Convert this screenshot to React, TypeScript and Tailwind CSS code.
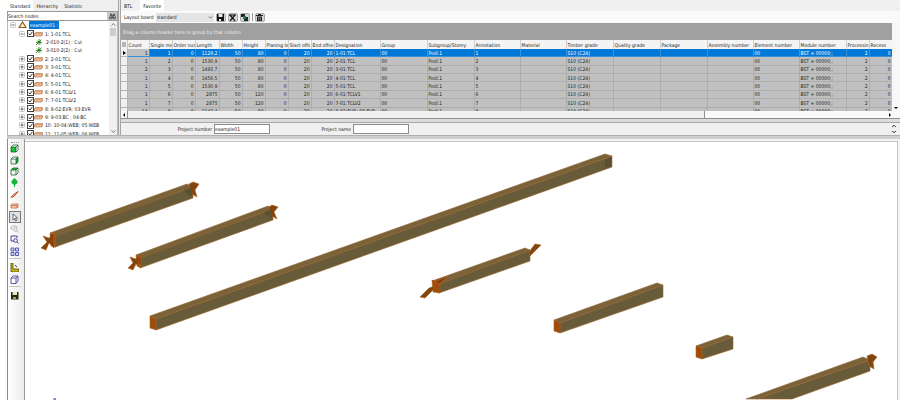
import { useState, type ReactNode } from 'react'
import { Binoculars, ChevronDown, ChevronUp } from 'lucide-react'
import clsx from 'clsx'

const treeItems = [
  { label: '2: 2-01:TCL' },
  { label: '3: 3-01:TCL' },
  { label: '4: 4-01:TCL' },
  { label: '5: 5-01:TCL' },
  { label: '6: 6-01:TCLV1' },
  { label: '7: 7-01:TCLV2' },
  { label: '8: 8-02:EVR; 03:EVR' },
  { label: '9: 9-03:BC ; 04:BC' },
  { label: '10: 10-04:WEB; 05:WEB' },
  { label: '11: 11-05:WEB; 06:WEB' }
]

const columns = [
  { label: 'Count', width: 22, numeric: true },
  { label: 'Single me', width: 23, numeric: true },
  { label: 'Order nur', width: 23, numeric: true },
  { label: 'Length', width: 24, numeric: true },
  { label: 'Width', width: 23, numeric: true },
  { label: 'Height', width: 23, numeric: true },
  { label: 'Planing le', width: 23, numeric: true },
  { label: 'Start offs', width: 23, numeric: true },
  { label: 'End offse', width: 23, numeric: true },
  { label: 'Designation', width: 46 },
  { label: 'Group', width: 47 },
  { label: 'Subgroup/Storey', width: 47 },
  { label: 'Annotation', width: 46 },
  { label: 'Material', width: 46 },
  { label: 'Timber grade', width: 47 },
  { label: 'Quality grade', width: 47 },
  { label: 'Package', width: 47 },
  { label: 'Assembly number', width: 46 },
  { label: 'Element number', width: 46 },
  { label: 'Module number', width: 47 },
  { label: 'Processin', width: 23, numeric: true },
  { label: 'Recess', width: 23, numeric: true }
]

const members = [
  { count: 1, no: 1, length: '1129,2', height: 80, name: '1-01:TCL' },
  { count: 1, no: 2, length: '1530,9', height: 80, name: '2-01:TCL' },
  { count: 2, no: 3, length: '1493,7', height: 80, name: '3-01:TCL' },
  { count: 1, no: 4, length: '1456,5', height: 80, name: '4-01:TCL' },
  { count: 1, no: 5, length: '1530,9', height: 80, name: '5-01:TCL' },
  { count: 1, no: 6, length: '2875', height: 120, name: '6-01:TCLV1' },
  { count: 1, no: 7, length: '2875', height: 120, name: '7-01:TCLV2' },
  { count: 14, no: 8, length: '1142,4', height: 80, name: '8-02:EVR; 03:EVR' }
]

const rows = members.map((m) => [
  m.count, m.no, 0, m.length, 50, m.height, 0, 20, 20, m.name, '00', 'Podl.1', m.no, '',
  'S10 (C24)', '', '', '', '00', 'BST = 00000;;', 2, 0
])

function Expander({ open = false }: { open?: boolean }) {
  return (
    <button aria-label={open ? 'Collapse' : 'Expand'} className="shrink-0">
      <svg viewBox="0 0 6 6" className="size-[6px]">
        <rect x=".5" y=".5" width="5" height="5" rx="1" fill="#fff" stroke="#b5b5b5" strokeWidth=".8" />
        <path d={open ? 'M1.5 3h3' : 'M1.5 3h3M3 1.5v3'} stroke="#444" strokeWidth=".8" />
      </svg>
    </button>
  )
}

function Beam() {
  return (
    <svg viewBox="0 0 9 6" className="h-[6px] w-[9px] shrink-0">
      <path d="M.5 2.5 1.500 1.500h7v2L7.500 5h-7z" fill="#f3cdac" stroke="#b9794c" strokeWidth=".7" />
      <path d="M.5 2.7h7V5M2 4h1M5 4h1" fill="none" stroke="#b9794c" strokeWidth=".6" />
    </svg>
  )
}

function CutIcon() {
  return (
    <svg viewBox="0 0 8 8" className="size-[8px] shrink-0">
      <path d="M1 7 6.5 1.5M2 2.5l4 4M4 1v6M1 4.5h6" stroke="#4c9a3c" strokeWidth="1" />
      <path d="M3 3h2.500v2H3z" fill="#2b7d20" />
    </svg>
  )
}

function TreeRow({ label, open }: { label: string; open?: boolean }) {
  return (
    <li className="flex items-center gap-[2px] pl-[11px]">
      <Expander open={open} />
      <label className="flex items-center whitespace-nowrap">
        <span className="grid place-items-center">
          <input type="checkbox" defaultChecked className="col-start-1 row-start-1 size-[7px] appearance-none border border-[#444] bg-white" />
          <svg viewBox="0 0 7 7" className="pointer-events-none col-start-1 row-start-1 size-[7px]">
            <path d="m1.700 3.500 1.300 1.500 2.400-3.200" fill="none" stroke="#222" strokeWidth=".9" />
          </svg>
        </span>
        <Beam />
        <span className="pl-[2px]">{label}</span>
      </label>
    </li>
  )
}

function TreePanel() {
  const [tab, setTab] = useState('Standard')
  return (
    <aside className="flex w-[112px] shrink-0 flex-col border-r border-[#a5a5a5] bg-[#f0f0f0]">
      <div className="flex h-[11px] shrink-0 items-stretch">
        {['Standard', 'Hierarchy', 'Statistic'].map((t) => (
          <button
            key={t}
            onClick={() => setTab(t)}
            className={clsx('px-[3px]', tab === t && 'bg-white')}
          >
            {t}
          </button>
        ))}
      </div>
      <div className="flex h-[10px] shrink-0 border border-[#9a9a9a] bg-white">
        <input aria-label="Search nodes" placeholder="Search nodes" className="min-w-0 flex-1 outline-none placeholder:text-[#222]" />
        <button aria-label="Search" className="flex w-[10px] items-center justify-center bg-[#c9c9c9]">
          <Binoculars size={7} />
        </button>
      </div>
      <div className="flex min-h-0 flex-1 overflow-hidden border-x border-[#b9b9b9] bg-white">
        <ul className="grid h-[117px] min-w-0 flex-1 auto-rows-fr overflow-hidden">
          <li className="flex items-center gap-[2px] pl-[2px]">
            <Expander open />
            <svg viewBox="0 0 9 8" className="h-[8px] w-[9px]">
              <path d="M4.500 1 8 6.500H1z" fill="#fff3c4" stroke="#8a5a20" strokeWidth="1.200" />
            </svg>
            <span className="bg-[#0078d7] px-px leading-[8px] text-white">example01 :</span>
          </li>
          <TreeRow open label="1: 1-01:TCL" />
          <li className="flex items-center gap-[3px] pl-[27px]"><CutIcon />2-010-2(1) : Cut</li>
          <li className="flex items-center gap-[3px] pl-[27px]"><CutIcon />3-010-2(2) : Cut</li>
          {treeItems.map((item) => <TreeRow key={item.label} label={item.label} />)}
        </ul>
        <div className="flex w-[8px] shrink-0 flex-col items-center bg-[#f0f0f0]">
          <ChevronUp size={7} />
          <div className="h-[8px] w-[6px] bg-[#cdcdcd]" />
          <ChevronDown size={7} className="mt-auto" />
        </div>
      </div>
    </aside>
  )
}

function BoardButton({ label, children }: { label: string; children: ReactNode }) {
  return (
    <button aria-label={label} className="flex h-[9px] w-[10px] items-center justify-center rounded-[2px] border border-[#aaa] bg-[#d6d6d6]">
      <svg viewBox="0 0 7 7" className="size-[7px]">{children}</svg>
    </button>
  )
}

function MemberTable() {
  return (
    <div className="h-[71px] overflow-hidden bg-[#c0c0c0]">
      <table className="h-[76px] w-full table-fixed border-collapse whitespace-nowrap">
        <colgroup>
          <col style={{ width: 6 }} />
          {columns.map((c) => <col key={c.label} style={{ width: c.width }} />)}
        </colgroup>
        <thead>
          <tr className="h-[9px] bg-[#f4f4f4]">
            <th className="border-r border-[#c8c8c8] p-0">
              <svg viewBox="0 0 4 5" className="mx-auto h-[5px] w-[4px]"><path d="M1 0v5M3 0v5" stroke="#555" strokeWidth=".8" /></svg>
            </th>
            {columns.map((c) => (
              <th key={c.label} className="overflow-hidden border-r border-[#d0d0d0] p-0 pl-px text-left font-normal leading-[6px]">
                {c.label}
              </th>
            ))}
          </tr>
        </thead>
        <tbody>
          {rows.map((row, i) => (
            <tr key={i} className={i === 0 ? 'bg-[#0078d7] text-white' : ''}>
              <td className="border-r border-b border-[#b4b4b4] bg-[#f0f0f0] p-0 text-center leading-[6px] text-black">
                {i === 0 && (
                  <svg viewBox="0 0 4 4" className="mx-auto size-[4px]"><path d="M1 0l3 2-3 2z" /></svg>
                )}
              </td>
              {row.map((cell, j) => (
                <td
                  key={j}
                  className={clsx(
                    'overflow-hidden border-r border-b p-0 px-px leading-[6px]',
                    i === 0 ? 'border-[#3b91d8]' : 'border-[#adadad]',
                    columns[j].numeric && 'text-right',
                    j === 0 && 'bg-[#c0c0c0] text-[#222]'
                  )}
                >
                  {cell}
                </td>
              ))}
            </tr>
          ))}
        </tbody>
      </table>
    </div>
  )
}

function ListPanel() {
  return (
    <section className="flex min-w-0 flex-1 flex-col border-l border-[#a5a5a5] bg-[#f0f0f0]">
      <div className="flex h-[11px] shrink-0">
        <button className="px-[3px]">BTL</button>
        <button className="ml-[5px] bg-white px-[3px]">Favorite</button>
      </div>
      <div className="flex h-[12px] shrink-0 items-center gap-[2px] bg-[#fafafa] pl-[3px]">
        <label htmlFor="board">Layout board</label>
        <span className="grid w-[58px] items-center">
          <select id="board" defaultValue="standard" className="col-start-1 row-start-1 h-[9px] appearance-none bg-[#e4e4e4] pl-px">
            <option>standard</option>
          </select>
          <ChevronDown size={5} strokeWidth={3} className="pointer-events-none col-start-1 row-start-1 mr-px justify-self-end" />
        </span>
        <BoardButton label="Save layout">
          <path d="M0 0h7v7H0z" fill="#161616" /><path d="M1.500 0h4v3h-4zM2 5h2v2H2z" fill="#e8e8e8" />
        </BoardButton>
        <BoardButton label="Delete layout">
          <path d="M0 1h7M1 1l5 6M6 1 1 7" stroke="#111" strokeWidth="1.200" />
        </BoardButton>
        <BoardButton label="Copy layout">
          <path d="M0 0h4v3H0zM3 3h4v4H3z" fill="#162d22" /><path d="M2 2h3v3H2z" fill="#287a50" />
        </BoardButton>
        <span className="h-[8px] w-px bg-[#999]" />
        <BoardButton label="Clear grouping">
          <path d="M0 1h7v1H0zM2 0h3v1H2zM1 2.500h5V7H1z" fill="#222" /><path d="M2.700 3v3.500M4.300 3v3.500" stroke="#bbb" strokeWidth=".6" />
        </BoardButton>
      </div>
      <div className="flex">
        <div className="min-w-0 flex-1">
          <p className="flex h-[17px] items-center bg-[#a0a0a0] pl-[2px] text-[#ececec]">
            Drag a column header here to group by that column
          </p>
          <MemberTable />
        </div>
        <div className="flex w-[8px] shrink-0 flex-col items-center justify-end bg-[#f7f7f7] pb-px">
          <svg viewBox="0 0 4 4" className="size-[4px]"><path d="M0 1h4L2 3z" /></svg>
        </div>
      </div>
      <div className="flex h-[8px] shrink-0 items-center border-b border-[#8e8e8e] bg-[#fafafa] pr-[8px]">
        <svg viewBox="0 0 4 4" className="mx-px size-[4px]"><path d="M3 0v4L1 2z" /></svg>
        <div className="h-full w-3/4 border-x border-[#8e8e8e] bg-[#f0f0f0]" />
        <svg viewBox="0 0 4 4" className="ml-auto size-[4px]"><path d="M1 0v4l2-2z" /></svg>
      </div>
      <div className="h-[4px] shrink-0 border-b border-[#a8a8a8] bg-[#dcdcdc]" />
      <form className="flex flex-1 items-center pr-[3px]">
        <label htmlFor="number" className="w-[93px] pr-[2px] text-right">Project number</label>
        <input id="number" defaultValue="example01" className="h-[10px] w-[56px] border border-[#8c8c8c] bg-white" />
        <label htmlFor="name" className="w-[83px] pr-[2px] text-right">Project name</label>
        <input id="name" className="h-[10px] w-[56px] border border-[#8c8c8c] bg-white" />
        <span className="ml-auto flex flex-col">
          <ChevronUp size={6} strokeWidth={4} />
          <ChevronDown size={6} strokeWidth={4} />
        </span>
      </form>
    </section>
  )
}

const Cube = ({ face, top, side }: { face: string; top: string; side: string }) => (
  <>
    <path d="M1 3h5v5H1z" fill={face} />
    <path d="M1 3l2-2h5L6 3z" fill={top} />
    <path d="M6 3l2-2v5L6 8z" fill={side} />
    <path d="M1 3h5v5H1zM1 3l2-2h5L6 3M8 1v5L6 8" fill="none" stroke="#0d4b1c" strokeWidth=".7" />
  </>
)

type Tool = { label: string; icon: ReactNode; active?: boolean }

const viewTools: Tool[] = [
  { label: 'Front view', icon: <Cube face="#12c83a" top="#fff" side="#fff" /> },
  { label: 'Side view', icon: <Cube face="#e9f5ea" top="#fff" side="#12b83a" /> },
  { label: 'Top view', icon: <Cube face="#e9f5ea" top="#12c83a" side="#fff" /> },
  {
    label: 'Rotate',
    icon: <path d="M4.500 0 7.500 3v2L5 7v2H4V7L1.500 5V3z" fill="#0fb936" />
  },
  {
    label: 'Measure',
    icon: <path d="M1 7.500 3 5l5-3.500L4.500 6 2.500 7z" fill="#f3c0a0" stroke="#b9441c" strokeWidth=".9" />
  },
  {
    label: 'Beam',
    icon: <path d="M1 4l1-1h6v3L7 7H1zM1 4.500h6V7" fill="#f6cdb0" stroke="#c26b3c" strokeWidth=".8" />
  },
  {
    label: 'Select',
    active: true,
    icon: <path d="M3 1v6l1.500-1.500L5.500 8l1-.5L5.500 5h2z" fill="#fff" stroke="#333" strokeWidth=".7" />
  },
  {
    label: 'Previous zoom',
    icon: (
      <g fill="none" stroke="#a3a3a8" strokeWidth=".8">
        <path d="M3 5H1V3l2-1h3l1 2M7 7l1.500 1.500" /><circle cx="5.500" cy="5.500" r="1.700" />
      </g>
    )
  },
  {
    label: 'Zoom window',
    icon: (
      <g fill="none" stroke="#30308c" strokeWidth=".9">
        <path d="M4 6H1V1h6v2M7 7l1.500 1.500" /><circle cx="5.500" cy="5.500" r="1.800" />
      </g>
    )
  },
  {
    label: 'Zoom all',
    icon: (
      <g fill="#d9d9f4" stroke="#4a4ab2" strokeWidth=".9">
        <path d="M1 1h3v3H1zM5.500 1h3v3h-3zM1 5.500h3v3H1zM5.500 5.500h3v3h-3z" />
      </g>
    )
  }
]

const drawTools: Tool[] = [
  {
    label: 'Dimensions',
    icon: <><path d="M1 0h2v6h6v3H1z" fill="#c3b51c" stroke="#4f4b08" strokeWidth=".8" /><path d="M5 2l2 2" stroke="#333" /></>
  },
  {
    label: 'Wireframe',
    icon: <path d="M1 3h5v5.500H1zM1 3l2-2h5L6 3M8 1v5L6 8.500" fill="#fff" stroke="#33338a" strokeWidth=".8" />
  }
]

const fileTools: Tool[] = [
  {
    label: 'Save view',
    icon: <><path d="M1 1h7.500v7.500H1z" fill="#232a12" /><path d="M2.500 1h4.500v3H2.500z" fill="#dfe5c0" /><path d="M3 6h3v2H3z" fill="#97a25a" /></>
  }
]

function ToolButton({ tool }: { tool: Tool }) {
  return (
    <button
      aria-label={tool.label}
      className={clsx(
        'flex w-[12px] items-center justify-center',
        tool.active && 'border border-[#777] bg-[#dde1e8]'
      )}
    >
      <svg viewBox="0 0 9 9" className="size-[9px]">{tool.icon}</svg>
    </button>
  )
}

function ViewToolbar() {
  return (
    <nav className="flex w-[17px] shrink-0 flex-col items-center border-r border-[#999] bg-gradient-to-r from-white to-[#ececec] pt-[3px] pr-[3px]">
      <span className="w-[8px] border-t border-dotted border-[#999]" />
      <div className="grid h-[114px] auto-rows-fr">
        {viewTools.map((tool) => <ToolButton key={tool.label} tool={tool} />)}
      </div>
      <div className="mt-px grid h-[27px] auto-rows-fr border-t border-[#c4c4c4] pt-[2px]">
        {drawTools.map((tool) => <ToolButton key={tool.label} tool={tool} />)}
      </div>
      <div className="mt-px grid h-[15px] border-t border-[#c4c4c4] pt-[2px]">
        {fileTools.map((tool) => <ToolButton key={tool.label} tool={tool} />)}
      </div>
    </nav>
  )
}

// top, side and end faces of every beam
const beams = [
  { top: '50,233 187,184 193,187 56,236', side: '55,235 193,187 193,198 55,247', end: '50,233 56,236 56,247 51,246' },
  { top: '136,255 268,206 273,209 141,258', side: '140,257 273,209 273,220 140,268', end: '136,255 141,258 141,268 137,266' },
  { top: '150,316 605,154 612,156 156,319', side: '156,319 612,156 612,167 156,330', end: '150,316 156,319 156,330 150,328' },
  { top: '432,281 525,248 530,250 440,284', side: '439,284 530,250 530,261 439,293', end: '432,280 440,283 440,293 433,292' },
  { top: '554,320 657,283 663,285 560,323', side: '560,323 663,285 663,297 560,333', end: '554,320 560,323 560,333 554,331' },
  { top: '696,346 727,335 733,337 702,348', side: '702,348 733,337 733,349 702,359', end: '696,346 702,348 702,359 696,357' },
  { top: '746,399 863,357 870,360 757,399', side: '757,399 870,360 870,371 792,399', end: '' }
]

// tenon plates that stick out of the beam ends
const plates = [
  '43,236 49,238 55,233 54,248 49,243 46,250 41,248 47,242',
  '130,257 136,259 141,254 141,266 136,264 133,270 128,268 133,263',
  '189,184 193,182 199,184 195,190 197,197 192,194',
  '269,207 272,205 278,207 274,212 277,219 272,216',
  '420,297 429,288 435,286 433,290 425,298',
  '529,252 535,244 541,245 530,256',
  '867,356 872,354 877,357 873,362 874,369 869,366'
]

function BeamView() {
  return (
    <svg viewBox="25 142 872 258" className="block w-full" role="img" aria-label="Beams">
      {beams.map((b) => (
        <g key={b.side} strokeWidth=".6" strokeLinejoin="round">
          <polygon points={b.side} fill="#685b3a" stroke="#9a6526" />
          <polygon points={b.top} fill="#7c6239" stroke="#8c6534" />
          {b.end && <polygon points={b.end} fill="#a04d0b" stroke="#ad5d18" />}
        </g>
      ))}
      {plates.map((p) => (
        <polygon key={p} points={p} fill="#82450f" stroke="#ad611d" strokeWidth=".6" />
      ))}
      <path d="M184 190l8-3v10l-5-3zM264 212l8-3v9l-5-2zM605 160l6-3v9l-6 2z" fill="#52492c" opacity=".6" />
      <path d="M434 282l14-6-8 8zM50 235l5-2-2 5 2 8M137 257l4-1-3 4 2 6" fill="#873e06" stroke="#c66d1c" strokeWidth=".5" />
      <path d="M53 400l1-2h2v2z" fill="#8b80bd" />
    </svg>
  )
}

export default function App() {
  return (
    <div className="flex h-screen flex-col overflow-hidden bg-white pl-[7px] font-['DejaVu_Sans_Condensed','DejaVu_Sans',sans-serif] text-[5px] leading-[8px] text-[#222]">
      <div className="flex h-[135px] shrink-0 gap-px bg-[#e6e6e6]">
        <TreePanel />
        <ListPanel />
      </div>
      <div className="h-[4px] shrink-0 border-t border-[#b0b0b0] bg-[#cfcfcf]" />
      <div className="flex min-h-0 flex-1 border-l border-[#8c8c8c] bg-[#f4f4f4]">
        <ViewToolbar />
        <main className="mt-[2px] mr-[2px] min-w-0 flex-1 overflow-hidden border-t border-r border-[#c6c6c6] bg-white">
          <BeamView />
        </main>
      </div>
    </div>
  )
}
